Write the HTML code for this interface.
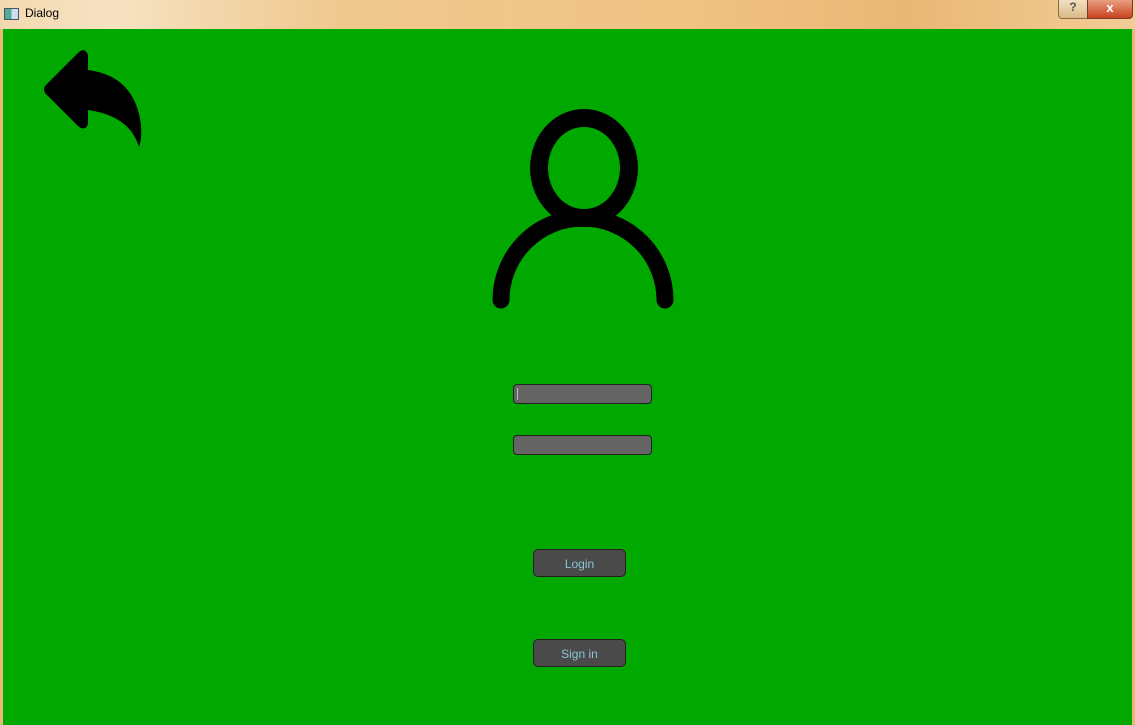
<!DOCTYPE html>
<html><head><style>
body{margin:0;width:1135px;height:725px;overflow:hidden;background:#e9b878;font-family:"Liberation Sans",sans-serif;position:relative}
.title{position:absolute;left:0;top:0;width:1135px;height:29px;background:linear-gradient(90deg,#f3d9b0 0%,#f6e2c2 10%,#efc88e 30%,#f0c384 60%,#e9b775 80%,#f2cd96 100%)}
.title span{position:absolute;left:25px;top:6px;font-size:12px;color:#000}
.ico{position:absolute;left:4px;top:8px;width:13px;height:10px;border:1px solid #456;background:linear-gradient(90deg,#5a9 50%,#cde 50%)}
.green{position:absolute;left:3px;top:29px;width:1129px;height:696px;background:#00a800}
.inp{position:absolute;left:513px;width:137px;height:18px;background:#646464;border:1px solid #222;border-radius:4px}
.btn{position:absolute;left:533px;width:91px;height:26px;background:#4a4a4a;border:1px solid #222;border-radius:5px;color:#8cc3d6;font-size:12px;text-align:center;line-height:28px}
.help{position:absolute;left:1058px;top:0;width:28px;height:18px;background:linear-gradient(#f2e0c0,#d9b988);border:1px solid #8a6a4a;border-top:none;border-radius:0 0 0 4px;text-align:center;font-size:12px;font-weight:bold;color:#555}
.close{position:absolute;left:1087px;top:0;width:44px;height:18px;background:linear-gradient(#e8a080,#c8431e);border:1px solid #7a3a2a;border-top:none;border-radius:0 0 4px 0;text-align:center;font-size:13px;font-weight:bold;color:#fff}
</style></head><body>
<div class="title"><div class="ico"></div><span>Dialog</span></div>
<div class="help">?</div><div class="close">x</div>
<div class="green"></div>
<svg style="position:absolute;left:0;top:0" width="1135" height="725">
<path d="M46,85 L79,52 Q85,47 88,55 L88,70 Q135,76 141,125 Q142,140 139,147 Q130,116 88,110 L88,124 Q85,132 78,126 L46,94 Q42,89 46,85 Z" fill="#000"/>
<ellipse cx="584" cy="168" rx="45" ry="50" fill="none" stroke="#000" stroke-width="18"/>
<path d="M501,300 A82,82 0 0 1 665,300" fill="none" stroke="#000" stroke-width="17" stroke-linecap="round"/>
</svg>
<div class="inp" style="top:384px"><div style="position:absolute;left:3px;top:3px;width:1px;height:12px;background:#bbb"></div></div>
<div class="inp" style="top:435px"></div>
<div class="btn" style="top:549px">Login</div>
<div class="btn" style="top:639px">Sign in</div>
</body></html>
